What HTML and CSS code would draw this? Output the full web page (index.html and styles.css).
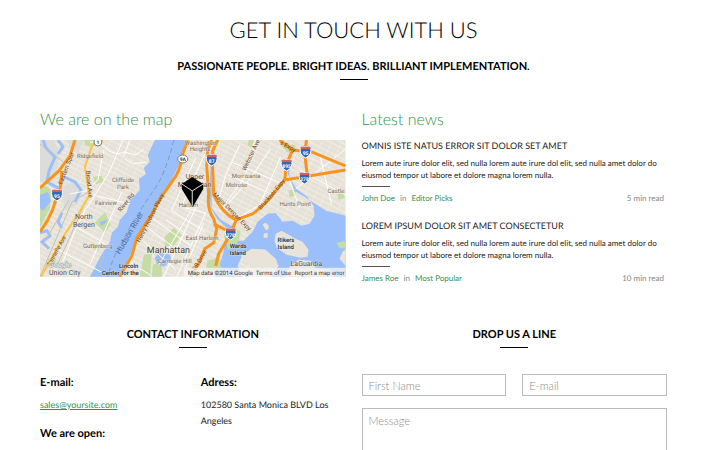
FILE: index.html
```html
<!DOCTYPE html>
<html lang="en">
<head>
<meta charset="utf-8">
<title>Get in touch with us</title>
<meta name="viewport" content="width=device-width, initial-scale=1">
<link rel="stylesheet" href="styles.css">
</head>
<body>
<main class="page">
  <header class="intro">
    <h1 class="intro-title">GET IN TOUCH WITH US</h1>
    <p class="label">PASSIONATE PEOPLE. BRIGHT IDEAS. BRILLIANT IMPLEMENTATION.</p>
  </header>

  <div class="columns overview">
    <section>
      <h2 class="heading">We are on the map</h2>
      <svg class="map" viewBox="0 0 306 137" role="img" aria-label="Map of Manhattan">
        <defs>
          <pattern id="blocks" width="9" height="14" patternUnits="userSpaceOnUse" patternTransform="rotate(27)">
            <path d="M0 0H9M0 0V14M0 5H9M0 10H9" class="block-line"/>
          </pattern>
          <g id="shield">
            <path d="M-5-5Q-3-6 0-5Q3-6 5-5Q7 3 0 6Q-7 3-5-5Z" class="shield-blue"/>
            <path d="M-5-5Q-3-6 0-5Q3-6 5-5V-3H-5Z" class="shield-red"/>
          </g>
        </defs>
        <rect width="306" height="137" class="land"/>
        <rect width="306" height="137" fill="url(#blocks)"/>

        <path class="park" d="M0 48Q8 42 11 52L10 68L0 88ZM53 37L62 36L64 42L56 44ZM55 83L65 72L71 85L65 93ZM125 97L134 88L142 95L133 107L125 106ZM104 115L112 114L110 137H100ZM113 125L122 122V137H112ZM44 0H56L52 7L45 5ZM73 120H80L74 127ZM192 86L201 92L198 106L188 110L184 95ZM168 121L180 119L185 127L178 133H165ZM209 0H214L212 7L208 6ZM241 4L256 5L254 14L247 12ZM297 102L306 100V110L300 108ZM298 54L305 51V58L299 60ZM249 50H256V56L250 57ZM54 105H61L58 111L53 109ZM8 119H16L14 127H8Z"/>
        <path class="marsh" d="M0 0H14L19 12L17 36L9 44L0 42ZM27 0H44L38 12L30 8ZM20 48L36 40L39 63L25 71Z"/>

        <path class="river" d="M115 0H148L142 20L130 43L118 65L106 84L97 101L88 120L80 137H50L61 116L70 102L72 93L78 87L80 80L87 72L90 61L100 50L99 39L106 34L104 28L110 22L108 15Z"/>
        <path class="river" d="M115 118L119 113L130 115L132 121L124 127L117 124ZM60 82L68 80L65 84L61 86ZM0 55L8 52L11 61L3 71L0 68Z"/>
        <path class="creek" d="M3 0L6 8L15 17L9 31L7 42L18 48L15 64M18 0L23 7L18 14M24 37L35 42L41 50L35 62M0 93L7 91L10 96L2 102L9 109M22 73L18 82L22 88"/>
        <path class="river" d="M177 2L171 12L170 55L171 68L178 80L189 90L185 101L184 112L180 125L175 137H202L198 126L202 117L213 109L226 110L236 119L239 126L232 137H306V76L296 73L287 71L276 64L267 58L255 51L252 43L248 33L246 21L249 19L250 38L257 49L268 57L274 66L275 76L270 84L262 86L253 81L243 82L236 73L228 74L218 82L213 92L204 101L198 101L195 88L181 80L172 68V12Z"/>
        <path class="land-shape" d="M236 94L242 91L256 99L263 102L269 110L268 117L261 118L247 115L237 108L235 101ZM223 85Q226 81 229 86Q230 91 226 90ZM224 94L228 93V98L224 98ZM245 137L250 127L259 120L271 121L276 128L290 130L295 137ZM201 116L212 109L225 110L236 119L238 126L225 129L209 124ZM303 112L306 110V126L300 119Z"/>
        <path class="park" d="M297 103L306 101V109L300 108ZM192 88L200 98L196 106L188 110L186 98ZM168 121L178 118L182 129L173 133Z"/>
        <path class="dash" d="M134 0Q125 37 112 53Q93 81 81 104Q72 119 68 137"/>

        <path class="street" d="M50 2Q63 2 68 10Q76 16 85 12L96 15L104 9M83 0L69 33L47 68M64 10L58 40L46 51L30 54M46 68L35 91L23 122M85 19L93 24L107 22M90 0L84 16M145 68L166 73M131 70L165 92M126 80L158 102M113 79L151 106M109 89L143 114M103 101L136 130M90 122L110 135M158 63L124 137M166 73L137 137M151 71L119 125M164 83L145 130M200 5L186 35L178 63M216 0L205 37L180 72M231 9L211 38L183 70M192 22L243 44M188 35L236 56M241 17L220 65L192 82M260 30L306 55M249 38L260 68M280 14L292 64M306 9L256 49M50 125L82 52M18 110L61 132M31 84L70 107M57 56L90 64M156 18L132 70M165 14L142 66"/>
        <path class="rail" d="M52 50L32 62L0 137M43 68L17 126M29 60L4 103M0 4L23 22M60 128L64 114"/>

        <path class="yellow-road" d="M63 1Q54 0 51 9L45 27Q48 45 49 56L38 75L25 94L13 116L1 137"/>
        <g class="highway">
          <path d="M35 0L30 16L19 31L0 48M17 50Q16 71 0 92M22 31L20 50"/>
          <path d="M148 0L143 14Q141 31 132 42L121 58L111 76L97 98L92 116L80 137"/>
          <path d="M172 0L168 10L167 26L169 54Q167 69 174 79L177 89L174 103L165 109L160 122L151 137"/>
          <path d="M178 0L173 11V29L174 55Q182 73 196 80L213 74Q228 63 237 50L245 40L306 30"/>
          <path d="M240 0L253 10L272 12L306 26M267 0L265 13L268 37M253 10L247 24L245 41M174 84L192 93M197 79L190 96L179 114L176 126"/>
        </g>

        <g class="road-name">
          <text transform="translate(22 45) rotate(-69)">Eastern Spur</text>
          <text transform="translate(46 31) rotate(84)">Broad Ave</text>
          <text transform="translate(10 127) rotate(-61)">Tonnelle Ave</text>
          <text transform="translate(100 103) rotate(-63)">Henry Hudson Pkwy</text>
          <text transform="translate(173 55) rotate(45)">Major Deegan Expy</text>
          <text transform="translate(221 70) rotate(-49)">Bruckner Expy</text>
          <text transform="translate(240 4) rotate(29)">s Expy</text>
          <text transform="translate(154 134) rotate(-59)">FDR Drive</text>
          <text transform="translate(206 31) rotate(-65)">Webster Ave</text>
          <text transform="translate(81 72) rotate(-51)">River Rd</text>
        </g>
        <text class="water-name" transform="translate(80 115) rotate(-60)">Hudson River</text>

        <g class="place">
          <text x="37" y="18">Ridgefield</text>
          <text x="72" y="42">Cliffside</text><text x="77" y="49">Park</text>
          <text x="55" y="65">Fairview</text>
          <text x="43" y="108">Guttenberg</text>
          <text x="145" y="5">Washington</text><text x="150" y="11">Heights</text>
          <text x="192" y="38">Morrisania</text><text x="186" y="47">Melrose</text>
          <text x="240" y="66">Hunts Point</text>
          <text x="288" y="53">Castle</text>
          <text x="139" y="67">Harlem</text>
          <text x="146" y="100">East Harlem</text>
          <text x="118" y="123">Carnegie Hill</text>
        </g>
        <g class="town">
          <text x="35" y="79">North</text><text x="33" y="87">Bergen</text>
          <text x="146" y="39">Upper</text><text x="138" y="47">Manhattan</text>
          <text x="9" y="135">Union City</text>
          <text x="251" y="126">LaGuardia</text>
        </g>
        <g class="landmark">
          <text x="79" y="128">Lincoln</text><text x="62" y="135">Center for the</text>
          <text x="238" y="102">Rikers</text><text x="238" y="109">Island</text>
          <text x="190" y="108">Wards</text><text x="190" y="115">Island</text>
        </g>
        <text class="city" x="107" y="113">Manhattan</text>

        <use href="#shield" x="17" y="55"/>
        <use href="#shield" x="172" y="20"/>
        <use href="#shield" x="266" y="12"/>
        <use href="#shield" x="247" y="25"/>
        <use href="#shield" x="265" y="38"/>
        <use href="#shield" x="191" y="94"/>
        <g class="shield-number">
          <text x="17" y="58">95</text><text x="172" y="23">87</text>
          <text x="266" y="15">95</text><text x="247" y="28">895</text>
          <text x="265" y="41">278</text><text x="191" y="97">278</text>
        </g>
        <circle class="route" cx="58" cy="2" r="4"/><ellipse class="route" cx="143" cy="19" rx="5" ry="4"/>
        <g class="route-number"><text x="58" y="4">1</text><text x="143" y="21">9A</text></g>

        <path d="M152.500 37L163.500 44V49L153 67L142 49V44Z" class="pin"/>
        <path d="M142 44L152.500 51L163.500 44M152.500 51V66" class="pin-line"/>

        <rect x="144" y="128" width="162" height="9" class="credit-bar"/>
        <text class="google" x="9" y="127">Google</text>
        <g class="credit">
          <text x="148" y="135">Map data ©2014 Google</text>
          <text x="216" y="135">Terms of Use</text>
          <text x="255" y="135">Report a map error</text>
        </g>
      </svg>
    </section>

    <section>
      <h2 class="heading">Latest news</h2>
      <article class="post">
        <h3 class="post-title">OMNIS ISTE NATUS ERROR SIT DOLOR SET AMET</h3>
        <p class="post-text">Lorem aute irure dolor elit, sed nulla lorem aute irure dol elit, sed nulla amet dolor do eiusmod tempor ut labore et dolore magna lorem nulla.</p>
        <footer class="post-meta">
          <a href="#">John Doe</a><span class="post-in">in</span><a href="#">Editor Picks</a>
          <span class="post-time">5 min read</span>
        </footer>
      </article>
      <article class="post">
        <h3 class="post-title">LOREM IPSUM DOLOR SIT AMET CONSECTETUR</h3>
        <p class="post-text">Lorem aute irure dolor elit, sed nulla lorem aute irure dol elit, sed nulla amet dolor do eiusmod tempor ut labore et dolore magna lorem nulla.</p>
        <footer class="post-meta">
          <a href="#">James Roe</a><span class="post-in">in</span><a href="#">Most Popular</a>
          <span class="post-time">10 min read</span>
        </footer>
      </article>
    </section>
  </div>

  <div class="columns">
    <section>
      <h2 class="label">CONTACT INFORMATION</h2>
      <div class="columns details">
        <div>
          <h3 class="detail-title">E-mail:</h3>
          <p class="detail-text"><a class="mail" href="mailto:sales@yoursite.com">sales@yoursite.com</a></p>
          <h3 class="detail-title">We are open:</h3>
        </div>
        <div>
          <h3 class="detail-title">Adress:</h3>
          <p class="detail-text">102580 Santa Monica BLVD Los Angeles</p>
        </div>
      </div>
    </section>
    <section>
      <h2 class="label">DROP US A LINE</h2>
      <form class="columns form">
        <input class="field" type="text" placeholder="First Name" aria-label="First Name">
        <input class="field" type="email" placeholder="E-mail" aria-label="E-mail">
        <textarea class="field message" placeholder="Message" aria-label="Message"></textarea>
      </form>
    </section>
  </div>
</main>
</body>
</html>
```
FILE: styles.css
```css
* { box-sizing: border-box; }
body, h1, h2, h3, p { margin: 0; }
body {
  background: #fff;
  color: #000;
  font-family: Lato, "Liberation Sans", sans-serif;
  text-rendering: geometricPrecision;
}
a { color: #3a8f50; text-decoration: none; }

.page { padding: 15px 53px 0 40px; }
.intro { text-align: center; }
.intro-title {
  margin-bottom: 14px;
  font-size: 22px;
  font-weight: 300;
  line-height: 30px;
}
.label {
  font-size: 11px;
  font-weight: 700;
  line-height: 16px;
  text-align: center;
}
.label::after {
  content: "";
  display: block;
  width: 28px;
  height: 1px;
  margin: 4px auto 0;
  background: #000;
}

.columns {
  display: grid;
  grid-template-columns: repeat(2, minmax(0, 1fr));
  column-gap: 16px;
}
.overview { padding: 28px 0 43px; }
.heading {
  margin-bottom: 8px;
  color: #3a8f50;
  font-size: 16px;
  font-weight: 300;
  line-height: 24px;
}

.post { margin-bottom: 16px; color: #222; }
.post:last-child { margin-bottom: 0; }
.post-title {
  font-size: 9px;
  font-weight: 400;
  line-height: 12px;
}
.post-text {
  margin-top: 5px;
  font-size: 8px;
  line-height: 12px;
}
.post-text::after {
  content: "";
  display: block;
  width: 28px;
  height: 1px;
  margin: 5px 0;
  background: #555;
}
.post-meta {
  display: flex;
  padding-right: 3px;
  font-size: 8px;
  line-height: 12px;
}
.post-in { margin: 0 5px; color: #888; }
.post-time { margin-left: auto; color: #888; }

.details, .form { margin-top: 26px; }
.detail-title {
  font-size: 11px;
  font-weight: 700;
  line-height: 18px;
}
.detail-text {
  margin: 5px 0 12px;
  color: #222;
  font-size: 9px;
  line-height: 16px;
}
.mail { text-decoration: underline; }
.form { row-gap: 12px; }
.field {
  width: 100%;
  height: 22px;
  padding: 0 6px;
  border: 1px solid #bbb;
  border-radius: 0;
  background: #fff;
  color: #222;
  font: 300 11px/16px Lato, "Liberation Sans", sans-serif;
}
.field::placeholder { color: #888; opacity: 1; }
.message {
  grid-column: 1 / -1;
  height: 80px;
  padding: 4px 6px;
  resize: vertical;
}

.map {
  display: block;
  width: 100%;
  height: auto;
  font-family: Roboto, "Noto Sans", sans-serif;
}
.land { fill: #e6e1d6; }
.land-shape { fill: #e9e4da; }
.block-line { fill: none; stroke: #f3f0ea; stroke-width: 1; }
.park { fill: #c5dca4; }
.marsh { fill: #dcdcda; }
.river { fill: #9bbffa; }
.creek { fill: none; stroke: #9bbffa; stroke-width: 3; }
.dash { fill: none; stroke: #8597b8; stroke-width: 1; stroke-dasharray: 5 3; }
.street { fill: none; stroke: #fff; stroke-width: 1; }
.rail { fill: none; stroke: #c4c1ba; stroke-width: 1; }
.yellow-road { fill: none; stroke: #fcc444; stroke-width: 2; }
.highway { fill: none; stroke: #f7941d; stroke-width: 3; stroke-linejoin: round; }
.road-name { fill: #6b4a28; font-size: 6px; }
.water-name { fill: #48699b; font-size: 8px; }
.place { fill: #7b6850; font-size: 6px; }
.town { fill: #54483a; font-size: 7px; }
.landmark { fill: #222; font-size: 6px; font-weight: 500; }
.city { fill: #4a3f33; font-size: 9px; }
.place, .town, .landmark, .city {
  paint-order: stroke;
  stroke: #f4f1ea;
  stroke-opacity: .6;
  stroke-width: 1;
}
.shield-blue { fill: #3468b4; stroke: #fff; stroke-width: 1; }
.shield-red { fill: #d46060; }
.shield-number { fill: #fff; font-size: 5px; font-weight: 700; text-anchor: middle; }
.route { fill: #fff; stroke: #777; stroke-width: 1; }
.route-number { fill: #333; font-size: 5px; font-weight: 700; text-anchor: middle; }
.pin { fill: #000; }
.pin-line { fill: none; stroke: #ddd; stroke-width: 1; }
.credit-bar { fill: #f5f5f5; fill-opacity: .75; }
.credit { fill: #333; font-size: 6px; }
.google { fill: #fff; stroke: #999; stroke-width: 1; paint-order: stroke; font-size: 7px; }
```
